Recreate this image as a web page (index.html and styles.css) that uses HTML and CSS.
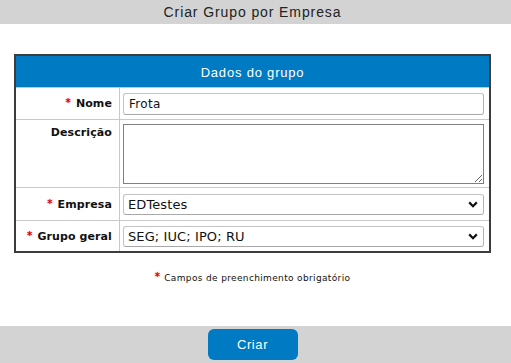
FILE: index.html
```html
<!DOCTYPE html>
<html lang="pt">
<head>
<meta charset="utf-8">
<title>Criar Grupo por Empresa</title>
<link rel="stylesheet" href="styles.css">
</head>
<body>
<header class="topbar"><h1 class="title">Criar Grupo por Empresa</h1></header>
<main class="main">
  <section class="panel">
    <div class="panel-head">Dados do grupo</div>
    <div class="row row-nome">
      <label class="label"><span class="req">*</span>Nome</label>
      <div class="field"><input class="text-input" type="text" value="Frota"></div>
    </div>
    <div class="row row-desc">
      <label class="label label-top">Descrição</label>
      <div class="field"><textarea class="textarea"></textarea></div>
    </div>
    <div class="row row-emp">
      <label class="label"><span class="req">*</span>Empresa</label>
      <div class="field">
        <div class="select-wrap">
          <select class="select"><option>EDTestes</option></select>
          <svg class="chev" width="10" height="7" viewBox="0 0 10 7"><path d="M1.2 1.4 L5 5.2 L8.8 1.4" fill="none" stroke="#111" stroke-width="2.2"/></svg>
        </div>
      </div>
    </div>
    <div class="row row-grp">
      <label class="label"><span class="req">*</span>Grupo geral</label>
      <div class="field">
        <div class="select-wrap">
          <select class="select"><option>SEG; IUC; IPO; RU</option></select>
          <svg class="chev" width="10" height="7" viewBox="0 0 10 7"><path d="M1.2 1.4 L5 5.2 L8.8 1.4" fill="none" stroke="#111" stroke-width="2.2"/></svg>
        </div>
      </div>
    </div>
  </section>
  <p class="note"><span class="req">*</span>Campos de preenchimento obrigatório</p>
</main>
<footer class="footer"><button class="btn" type="button">Criar</button></footer>
</body>
</html>
```
FILE: styles.css
```css
* { box-sizing: border-box; }
html, body { margin: 0; padding: 0; }
body {
  width: 511px;
  height: 363px;
  display: flex;
  flex-direction: column;
  background: #fff;
  font-family: "DejaVu Sans", Verdana, sans-serif;
  color: #111;
}
.topbar {
  height: 24px;
  background: #d3d3d3;
  padding: 0 20px 0 14px;
  display: flex;
  justify-content: center;
  align-items: center;
}
.title {
  margin: 0;
  font-family: "Liberation Sans", Arial, sans-serif;
  font-weight: normal;
  font-size: 14px;
  letter-spacing: 0.9px;
  color: #222;
  line-height: 24px;
}
.main {
  flex: 1;
  padding: 30px 20px 0 14px;
}
.panel {
  border: 2px solid #3c3c3c;
  background: #fff;
}
.panel-head {
  height: 31px;
  background: #007ac3;
  color: #fff;
  font-family: "Liberation Sans", Arial, sans-serif;
  font-size: 13px;
  letter-spacing: 0.8px;
  display: flex;
  align-items: center;
  justify-content: center;
  padding-top: 1px;
}
.row {
  display: grid;
  grid-template-columns: 104px 1fr;
  border-top: 1px solid #c8c8c8;
}
.label {
  border-right: 1px solid #c8c8c8;
  font-size: 11px;
  font-weight: bold;
  letter-spacing: 0.1px;
  text-align: right;
  padding-right: 7px;
  display: flex;
  align-items: center;
  justify-content: flex-end;
  color: #111;
}
.label-top { align-items: flex-start; padding-top: 6px; }
.req {
  color: #e00000;
  font-size: 10px;
  font-weight: bold;
  text-shadow: 0 0 2px #ff9090;
  margin-right: 5px;
  position: relative;
  top: -1px;
}
.field { padding: 0 5px 0 3px; display: flex; align-items: center; }
.row-nome { height: 32px; }
.row-desc { height: 68px; }
.row-desc .field { align-items: flex-start; padding-top: 4px; }
.row-emp { height: 33px; }
.row-grp { height: 31px; }
.text-input {
  width: 100%;
  height: 22px;
  border: 1px solid #c4c4c4;
  border-bottom-color: #a8a8a8;
  border-right-color: #b4b4b4;
  border-radius: 3px;
  padding: 0 5px;
  font-family: "DejaVu Sans", Verdana, sans-serif;
  font-size: 12px;
  letter-spacing: 0.3px;
  color: #111;
  background: #fff;
  outline: none;
}
.textarea {
  width: 361px;
  height: 60px;
  border: 1px solid #808080;
  border-radius: 0;
  margin: 0;
  padding: 2px;
  font-family: "DejaVu Sans", Verdana, sans-serif;
  font-size: 12px;
  background: #fff;
}
.select-wrap { position: relative; width: 100%; }
.select {
  -webkit-appearance: none;
  appearance: none;
  width: 100%;
  height: 21px;
  border: 1px solid #c4c4c4;
  border-bottom-color: #a8a8a8;
  border-right-color: #b4b4b4;
  border-radius: 3px;
  padding: 0 20px 0 4px;
  font-family: "DejaVu Sans", Verdana, sans-serif;
  font-size: 13px;
  letter-spacing: 0.1px;
  color: #111;
  background: #fff;
}
.chev {
  position: absolute;
  right: 6px;
  top: 7px;
  pointer-events: none;
}
.note {
  margin: 19px 0 0;
  text-align: center;
  font-size: 9px;
  letter-spacing: 0.35px;
  color: #111;
}
.note .req { font-size: 10px; margin-right: 4px; top: -1px; }
.footer {
  height: 37px;
  background: #d3d3d3;
  padding: 3px 20px 0 14px;
  display: flex;
  justify-content: center;
  align-items: flex-start;
}
.btn {
  width: 90px;
  height: 31px;
  border: none;
  border-radius: 6px;
  background: #007ac3;
  color: #fff;
  font-family: "Liberation Sans", Arial, sans-serif;
  font-size: 13px;
  letter-spacing: 0.6px;
  padding: 0;
}
```
